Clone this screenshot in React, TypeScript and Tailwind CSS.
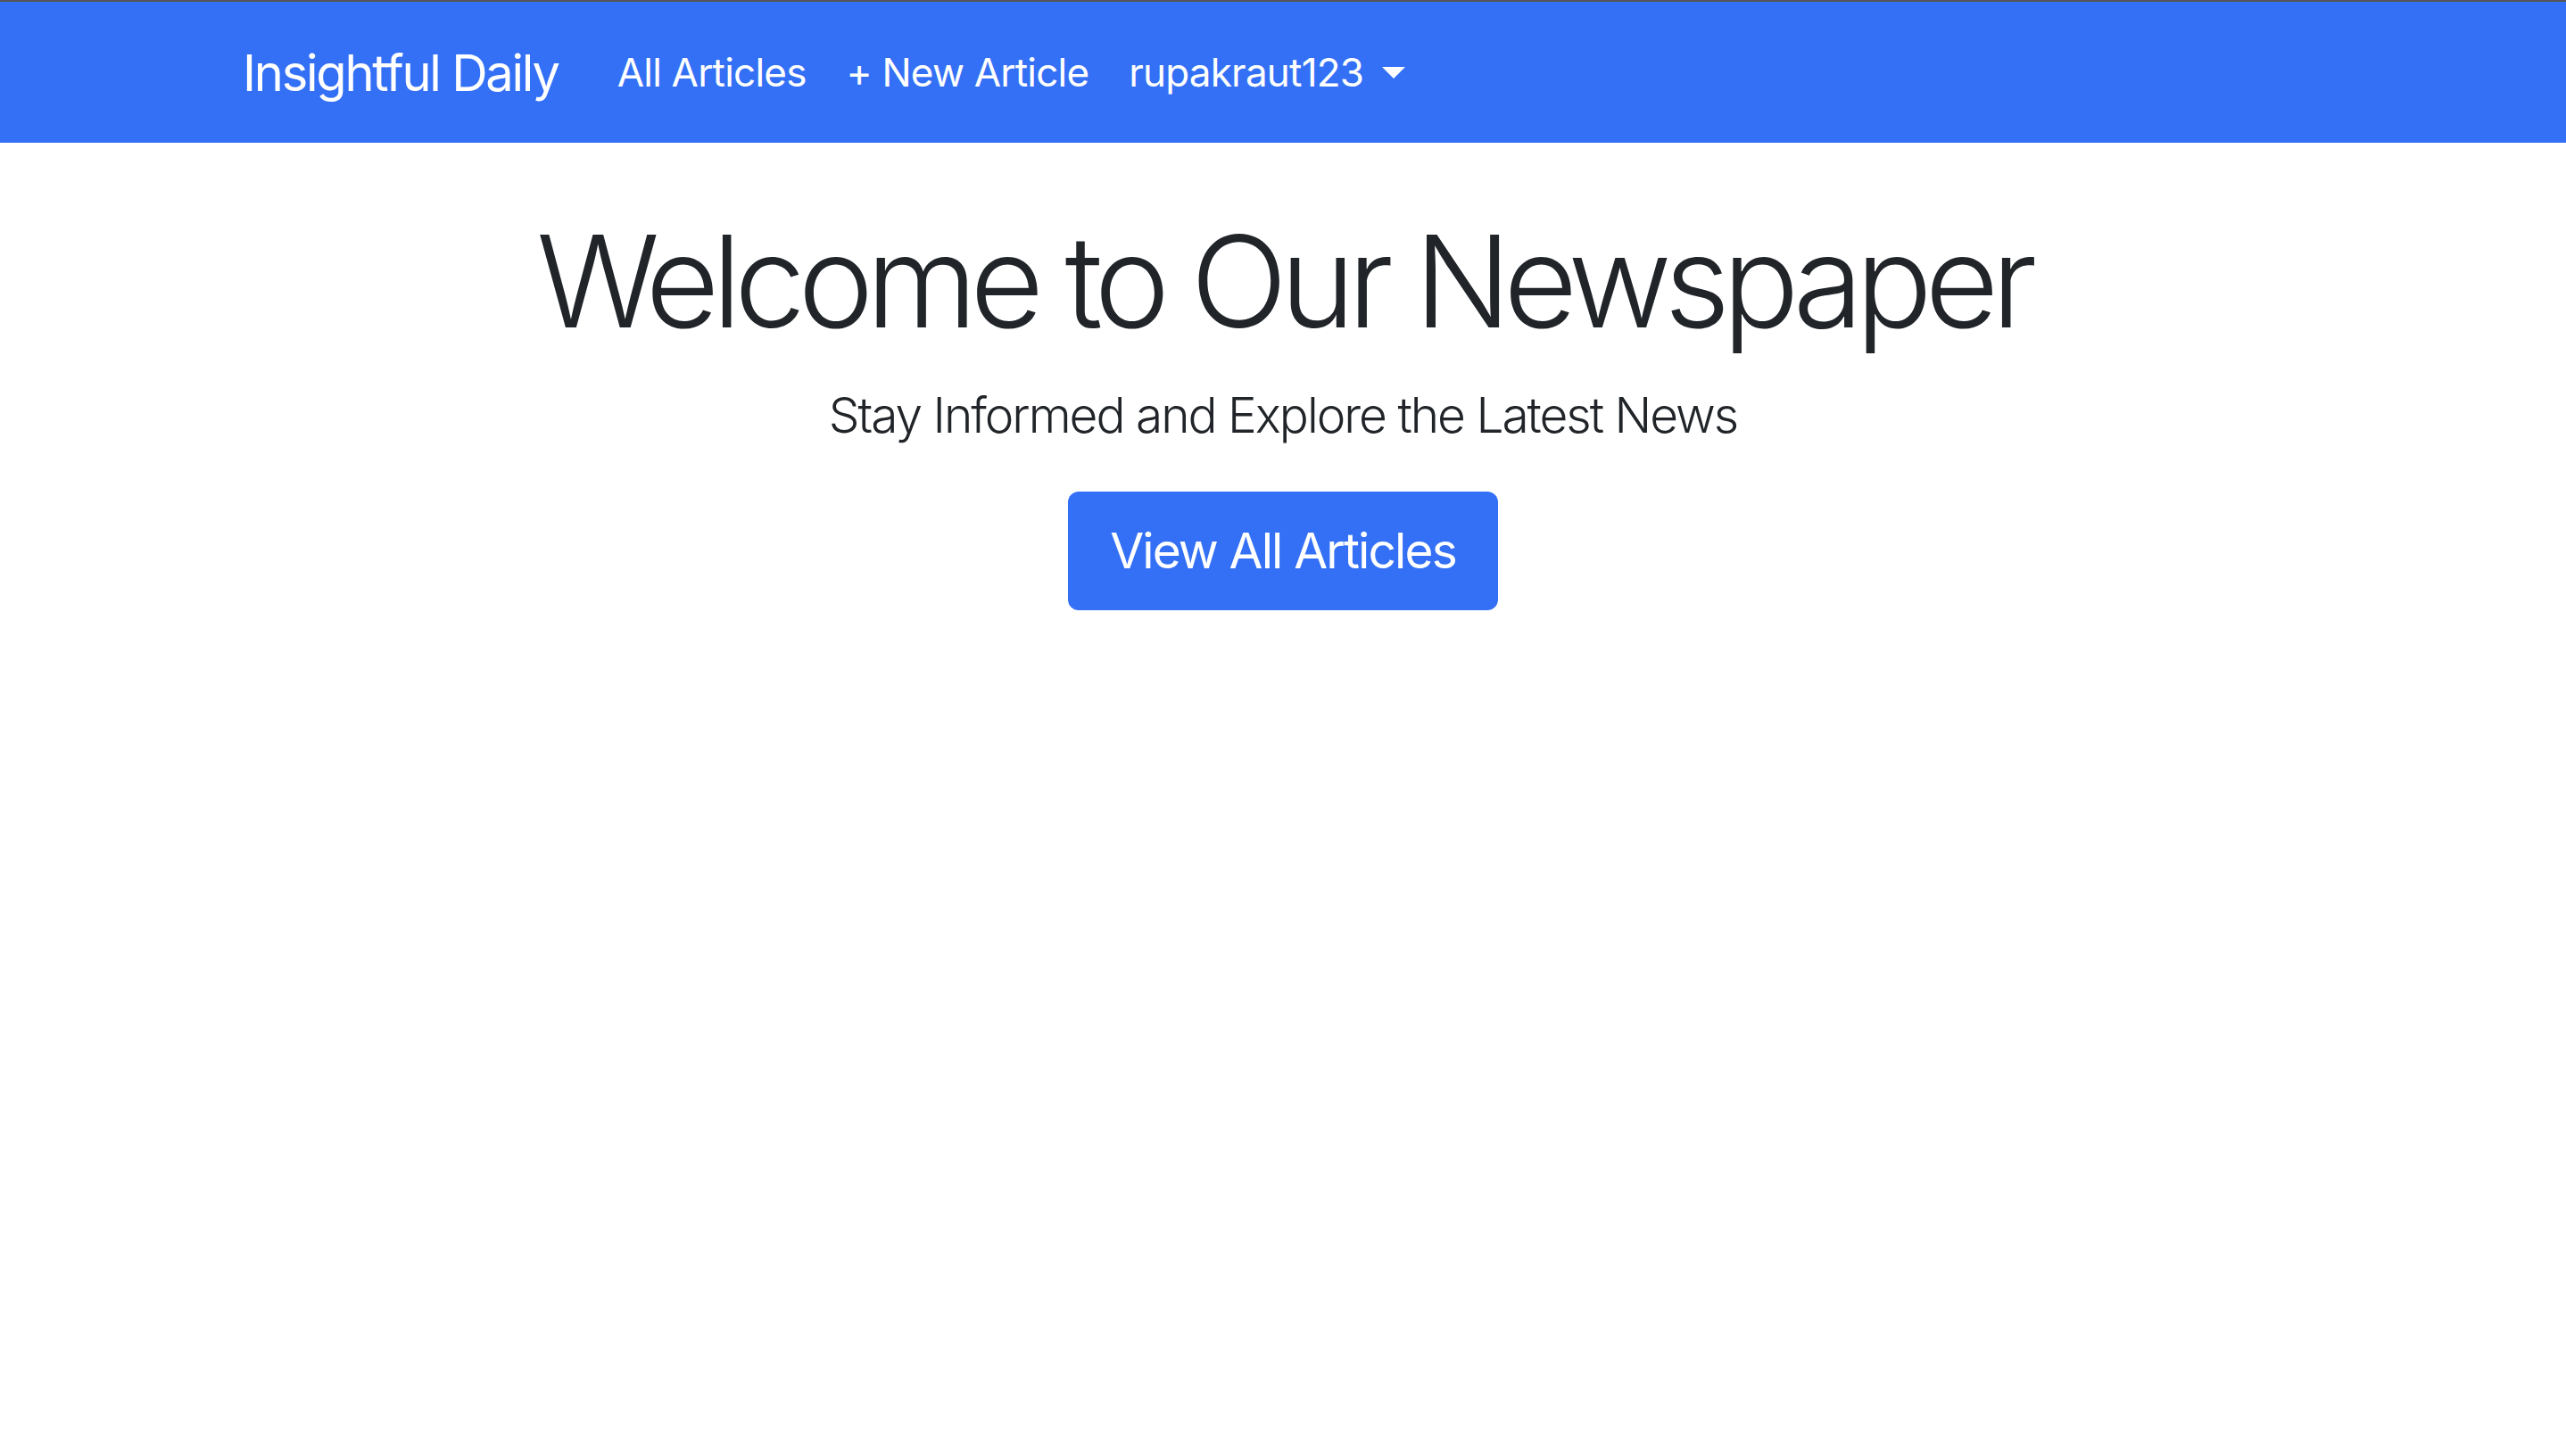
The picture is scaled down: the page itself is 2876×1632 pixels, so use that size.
import React from "react";

export default function App() {
  return (
    <div className="min-h-screen w-full bg-white" style={{ fontFamily: "Inter, 'Noto Sans', sans-serif" }}>
      <div className="h-[2px] bg-[#555555]" />
      <nav className="h-[158px] bg-[#3470f5] flex items-center pl-[272px] text-white">
        <a className="text-[56px] leading-none tracking-[-0.04em] mr-[66px] mt-[2px]">Insightful Daily</a>
        <div className="flex items-center gap-[45px] text-[44px] leading-none tracking-[-0.018em]">
          <a>All Articles</a>
          <a>+ New Article</a>
          <a className="flex items-center">
            rupakraut123
            <svg width="26" height="13" viewBox="0 0 26 13" className="ml-[21px]">
              <polygon points="0,0 26,0 13,13" fill="white" />
            </svg>
          </a>
        </div>
      </nav>
      <main className="flex flex-col items-center text-[#212529]">
        <h1 className="mt-[69px] text-[143px] leading-[1.2] font-light tracking-[-0.059em]">Welcome to Our Newspaper</h1>
        <p className="mt-[23px] text-[55px] leading-[1.5] font-light tracking-[-0.037em]">Stay Informed and Explore the Latest News</p>
        <button className="mt-[45px] w-[482px] h-[133px] rounded-[12px] bg-[#3470f5] text-white text-[55px] leading-none tracking-[-0.034em] flex items-center justify-center">
          View All Articles
        </button>
      </main>
    </div>
  );
}
